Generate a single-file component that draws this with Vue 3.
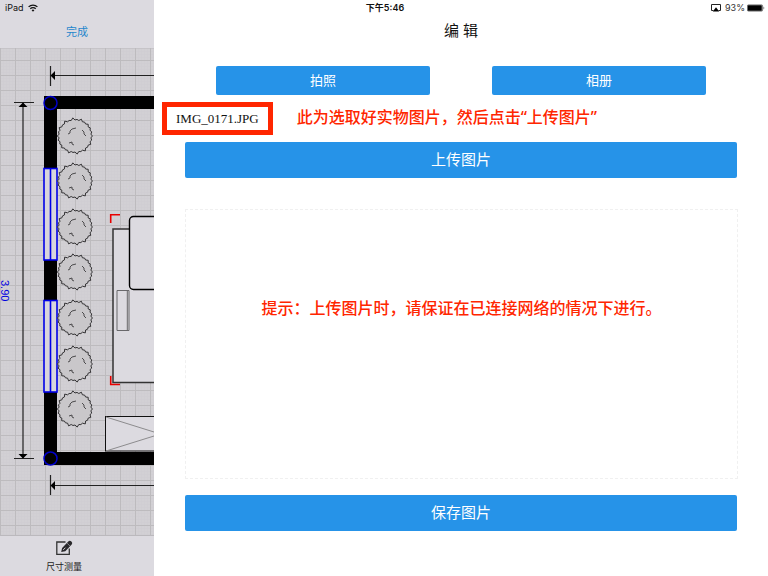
<script setup>
const treeRows = [136, 181, 227, 272, 318, 364, 409]
const windowRows = [168, 300]

const bumps = 26
const points = Array.from({ length: bumps * 2 }, (_, i) => {
  const angle = (i / (bumps * 2)) * Math.PI * 2
  const radius = i % 2 ? 16 : 17.4 + Math.sin(i * 1.7) * 0.8
  return `${(Math.cos(angle) * radius).toFixed(1)},${(Math.sin(angle) * radius).toFixed(1)}`
})
const crown = `M${points.join('L')}Z`
</script>

<template>
  <div class="page">
    <div class="status">
      <span class="status-left">
        iPad
        <svg width="10" height="8" viewBox="0 0 10 8" aria-hidden="true">
          <g fill="none" stroke="#111" stroke-width="1.3">
            <path d="M0.6 2.9a6.2 6.2 0 0 1 8.8 0" />
            <path d="M2.3 4.8a3.8 3.8 0 0 1 5.4 0" />
          </g>
          <path d="M3.6 6.2a2 2 0 0 1 2.8 0L5 7.8Z" fill="#111" />
        </svg>
      </span>
      <span class="clock">下午5:46</span>
      <span class="status-right">
        <svg width="10" height="8" viewBox="0 0 10 8" aria-hidden="true">
          <path d="M2.5 6.5H0.5V0.5H9.5V6.5H7.5" fill="none" stroke="#222" />
          <path d="M5 3.2L8.2 7.6H1.8Z" fill="#000" />
        </svg>
        <span class="percent">93%</span>
        <svg class="battery" width="18" height="8" viewBox="0 0 18 8" aria-hidden="true">
          <rect x="0.4" y="0.9" width="15.2" height="6.2" rx="1" fill="#fff" stroke="#444" stroke-width="0.7" />
          <rect x="0.8" y="1.2" width="14" height="5.6" rx="0.5" fill="#000" />
          <path d="M16.6 2.6q1.4 1.4 0 2.8Z" fill="#222" />
        </svg>
      </span>
    </div>

    <aside class="sidebar">
      <header class="side-head">
        <button class="done" type="button">完成</button>
      </header>
      <svg class="plan" viewBox="0 48 154 488" preserveAspectRatio="xMinYMin slice" role="img" aria-label="3.90">
        <defs>
          <pattern id="minor" width="3" height="3" patternUnits="userSpaceOnUse">
            <path d="M0 0.5H3M0.5 0V3" stroke="#cfcdd1" stroke-width="0.6" />
          </pattern>
          <pattern id="major" width="15" height="15" patternUnits="userSpaceOnUse">
            <path d="M0 0.5H15M0.5 0V15" stroke="#bdbbbe" />
          </pattern>
          <g id="tree">
            <path :d="crown" fill="#c9c7ca" stroke="#343335" stroke-width="1" />
            <path d="M-7 -2L-5 -3L-5 -5L-3 -7L1 -8M7 -6L9 -4L9 -2L11 0M-6 7L-3 6L-3 8L-1 9" fill="none" stroke="#4c4b4d" stroke-width="1" />
          </g>
        </defs>
        <rect y="48" width="154" height="488" fill="#d2d0d4" />
        <rect y="48" width="154" height="488" fill="url(#minor)" />
        <rect y="48" width="154" height="488" fill="url(#major)" />
        <path d="M0 48H154M0 535.5H154" stroke="#bbb9bd" />

        <g fill="none" stroke="#222" stroke-width="1.2">
          <path d="M50.5 66V86M50.5 75.5H154" />
          <path d="M14 102.5H34M23 103V458M14 458.5H34" />
          <path d="M50.5 475V495M50.5 485.5H154" />
        </g>
        <path d="M50.5 75.5L55 71V80ZM23 102.5L18.5 107H27.5ZM23 458.5L18.5 454H27.5ZM50.5 485.5L55 481V490Z" fill="#000" />

        <path d="M154 96H44V465H154V452H57V109H154Z" fill="#000" />
        <g v-for="y in windowRows" :key="y" stroke="#0000e8" stroke-width="1.6">
          <rect x="44" :y="y + 0.5" width="13" height="91.5" fill="#d8d6dc" />
          <path :d="`M50.5 ${y}v92`" />
        </g>
        <g fill="none" stroke="#0000c8" stroke-width="1.5">
          <circle cx="50.5" cy="103" r="6.5" />
          <circle cx="50.5" cy="458.5" r="6.5" />
        </g>

        <use v-for="y in treeRows" :key="y" href="#tree" x="75" :y="y" />

        <rect x="113" y="229" width="60" height="153.5" fill="#dcdae0" stroke="#333" stroke-width="1.5" />
        <rect x="129.5" y="216.5" width="50" height="73" rx="4" fill="#dcdae0" stroke="#000" stroke-width="1.4" />
        <path d="M117 290.5H129V330.5H117ZM127.3 290.5V330.5" fill="none" stroke="#69686b" />
        <path d="M110.7 223V214.7H120M110.7 376V384.5H120" fill="none" stroke="#e80000" stroke-width="1.6" />
        <rect x="105.5" y="416.5" width="70" height="34.5" fill="#dcdae0" stroke="#111" />
        <path d="M106 417L154 432M106 451L154 436" fill="none" stroke="#8c8b8d" />
        <text class="measure" transform="translate(1 280) rotate(90)">3.90</text>
      </svg>
      <footer class="side-foot">
        <button class="tool" type="button">
          <svg width="18" height="16" viewBox="0 0 18 16" aria-hidden="true">
            <path d="M10.5 2H1.8V14.3H14.3V8.5" fill="none" stroke="#333" stroke-width="1.3" />
            <path d="M6.2 12L7.1 8.1L13.3 1.5Q14.6 0.1 16.4 1.4Q18 3 16.7 4.5L10.3 11.2Z" fill="#29282b" />
            <path d="M12.1 3.2L15 6" stroke="#dcdae0" stroke-width="0.5" />
            <path d="M8.2 9.9L10.4 7.7" stroke="#dcdae0" stroke-width="0.9" />
          </svg>
          <span>尺寸测量</span>
        </button>
      </footer>
    </aside>

    <main class="editor">
      <h1>编 辑</h1>
      <div class="sources">
        <button class="btn small" type="button">拍照</button>
        <button class="btn small" type="button">相册</button>
      </div>
      <div class="file-row">
        <span class="file-name">IMG_0171.JPG</span>
        <p class="note">此为选取好实物图片，然后点击“上传图片”</p>
      </div>
      <button class="btn wide" type="button">上传图片</button>
      <section class="preview">
        <p class="note">提示：上传图片时，请保证在已连接网络的情况下进行。</p>
      </section>
      <button class="btn wide" type="button">保存图片</button>
    </main>
  </div>
</template>

<style>
body {
  margin: 0;
}
</style>

<style scoped>
.page {
  position: relative;
  display: grid;
  grid-template-columns: 154px 1fr;
  min-height: 100vh;
  background: #fff;
  color: #111;
  font-family: "Liberation Sans", "Noto Sans CJK SC", sans-serif;
}
button {
  border: 0;
  padding: 0;
  background: none;
  font-family: inherit;
  cursor: pointer;
}
h1,
p {
  margin: 0;
}
.status {
  position: absolute;
  inset: 0 0 auto;
  display: grid;
  grid-template-columns: 1fr auto 1fr;
  align-items: center;
  height: 16px;
  padding: 0 3px 0 5px;
  font-family: Inter, "Noto Sans CJK SC", sans-serif;
  font-size: 9px;
  line-height: 16px;
}
.status-left,
.status-right {
  display: flex;
  align-items: center;
  gap: 4px;
}
.status-right {
  justify-content: flex-end;
}
.battery {
  margin-left: -2px;
}
.clock {
  font-weight: 600;
}
.percent {
  color: #333;
}
.sidebar {
  display: flex;
  flex-direction: column;
  background: #dcdae0;
}
.side-head {
  display: flex;
  justify-content: center;
  padding-top: 16px;
  height: 32px;
}
.done {
  color: #1f86cc;
  font-size: 11px;
  line-height: 32px;
}
.plan {
  flex: 1;
  display: block;
  width: 100%;
  min-height: 0;
}
.measure {
  fill: #0000e0;
  font-size: 11px;
}
.side-foot {
  display: flex;
  height: 40px;
  padding-right: 26px;
  justify-content: center;
}
.tool {
  display: flex;
  flex-direction: column;
  align-items: center;
  padding-top: 4px;
  color: #222;
  font-size: 9px;
  line-height: 22px;
}
.tool svg {
  flex: none;
}
.editor {
  display: flex;
  flex-direction: column;
  padding-top: 16px;
}
h1 {
  font-size: 15px;
  font-weight: 400;
  line-height: 30px;
  text-align: center;
}
.sources {
  display: grid;
  grid-template-columns: 1fr 1fr;
  gap: 62px;
  margin: 20px 62px 0;
}
.btn {
  padding-bottom: 3px;
  border-radius: 2px;
  background: #2693e8;
  color: #fff;
}
.small {
  height: 29px;
  font-size: 13px;
}
.wide {
  height: 36px;
  margin: 0 31px;
  font-size: 15px;
}
.file-row {
  display: flex;
  align-items: center;
  gap: 24px;
  padding: 7px 8px;
}
.file-name {
  border: 5px solid #ff2600;
  padding: 0 9px;
  font-family: "Liberation Serif", serif;
  font-size: 13px;
  line-height: 23px;
}
.note {
  padding-bottom: 3px;
  color: #ff2600;
  font-family: "Noto Sans", "Noto Sans CJK SC", sans-serif;
  font-size: 16px;
  font-weight: 500;
  line-height: 24px;
}
.preview {
  display: flex;
  flex: 0 1 168px;
  justify-content: center;
  margin: 31px 30px 16px 31px;
  padding: 86px 0 0;
  min-height: 182px;
  border: 1px dashed #f0f0f0;
}
</style>
